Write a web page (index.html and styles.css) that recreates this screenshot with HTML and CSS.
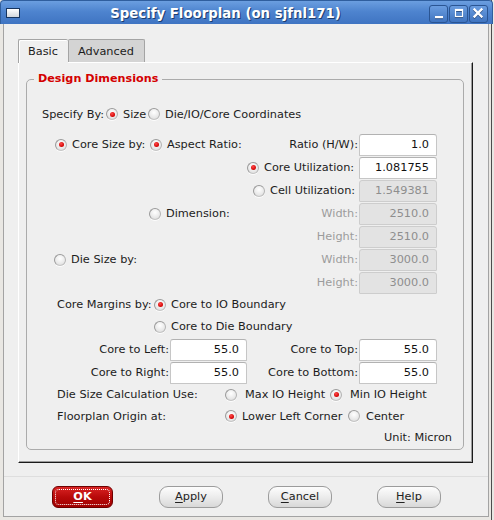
FILE: index.html
```html
<!DOCTYPE html>
<html>
<head>
<meta charset="utf-8">
<title>Specify Floorplan</title>
<link rel="stylesheet" href="styles.css">
</head>
<body>
<div class="window">
  <div class="titlebar">
    <span class="wm-icon"></span>
    <span class="title">Specify Floorplan (on sjfnl171)</span>
    <div class="wm-buttons">
      <span class="wm-btn"><svg width="17" height="16" viewBox="0 0 17 16"><rect x="5" y="10" width="8" height="2.2" fill="#fff"/></svg></span>
      <span class="wm-btn"><svg width="17" height="16" viewBox="0 0 17 16"><rect x="5.5" y="3.5" width="7" height="7" fill="none" stroke="#fff" stroke-width="1.2"/><rect x="5" y="3" width="8" height="2" fill="#fff"/></svg></span>
      <span class="wm-btn"><svg width="17" height="16" viewBox="0 0 17 16"><path d="M4.5 3.5 L11.5 10.5 M11.5 3.5 L4.5 10.5" stroke="#fff" stroke-width="2.3" stroke-linecap="square"/></svg></span>
    </div>
  </div>
  <div class="frame">
    <div class="client">
      <div class="main">
        <div class="tabs">
          <span class="tab tab-basic active">Basic</span>
          <span class="tab tab-adv">Advanced</span>
        </div>
        <div class="pane">
          <fieldset class="group">
            <legend>Design Dimensions</legend>

            <div class="row r-specify">
              <span class="cell w64">Specify By:</span>
              <span class="opt w42"><span class="rb on"></span>Size</span>
              <span class="opt"><span class="rb"></span>Die/IO/Core Coordinates</span>
            </div>

            <div class="row pl28">
              <span class="opt w95"><span class="rb on"></span>Core Size by:</span>
              <span class="opt"><span class="rb on"></span>Aspect Ratio:</span>
              <span class="pair"><span class="lbl">Ratio (H/W):</span><input class="field" value="1.0" readonly></span>
            </div>

            <div class="row pl220">
              <span class="opt"><span class="rb on"></span>Core Utilization:</span>
              <span class="pair"><input class="field" value="1.081755" readonly></span>
            </div>

            <div class="row pl226">
              <span class="opt"><span class="rb"></span>Cell Utilization:</span>
              <span class="pair"><input class="field" value="1.549381" disabled></span>
            </div>

            <div class="row pl122">
              <span class="opt"><span class="rb"></span>Dimension:</span>
              <span class="pair"><span class="lbl dim">Width:</span><input class="field" value="2510.0" disabled></span>
            </div>

            <div class="row">
              <span class="pair"><span class="lbl dim">Height:</span><input class="field" value="2510.0" disabled></span>
            </div>

            <div class="row pl27">
              <span class="opt"><span class="rb"></span>Die Size by:</span>
              <span class="pair"><span class="lbl dim">Width:</span><input class="field" value="3000.0" disabled></span>
            </div>

            <div class="row">
              <span class="pair"><span class="lbl dim">Height:</span><input class="field" value="3000.0" disabled></span>
            </div>

            <div class="row pl30 h21">
              <span class="cell w97">Core Margins by:</span>
              <span class="opt"><span class="rb on"></span>Core to IO Boundary</span>
            </div>

            <div class="row pl127">
              <span class="opt"><span class="rb"></span>Core to Die Boundary</span>
            </div>

            <div class="row">
              <span class="cell lbl-left">Core to Left:</span><input class="field narrow" value="55.0" readonly>
              <span class="cell lbl-right">Core to Top:</span><input class="field" value="55.0" readonly>
            </div>

            <div class="row">
              <span class="cell lbl-left">Core to Right:</span><input class="field narrow" value="55.0" readonly>
              <span class="cell lbl-right">Core to Bottom:</span><input class="field" value="55.0" readonly>
            </div>

            <div class="row pl30 h21">
              <span class="cell w168">Die Size Calculation Use:</span>
              <span class="opt gap8 w105"><span class="rb"></span>Max IO Height</span>
              <span class="opt gap8"><span class="rb on"></span>Min IO Height</span>
            </div>

            <div class="row pl30 h22">
              <span class="cell w168">Floorplan Origin at:</span>
              <span class="opt w123"><span class="rb on"></span>Lower Left Corner</span>
              <span class="opt gap6"><span class="rb"></span>Center</span>
            </div>

            <div class="row row-unit">
              <span>Unit: Micron</span>
            </div>
          </fieldset>
        </div>
      </div>
      <div class="buttonbar">
        <span class="btn btn-ok"><u>O</u>K</span>
        <span class="btn"><u>A</u>pply</span>
        <span class="btn"><u>C</u>ancel</span>
        <span class="btn"><u>H</u>elp</span>
      </div>
    </div>
  </div>
</div>
</body>
</html>
```

FILE: styles.css
```css
* { box-sizing: border-box; }

body {
  margin: 0;
  background: #e9e7e3;
  font-family: "DejaVu Sans", "Liberation Sans", sans-serif;
  font-size: 11.3px;
  color: #1c1c1c;
}

.window {
  width: 494px;
  height: 520px;
  display: flex;
  flex-direction: column;
  background: #e9e7e3 linear-gradient(to right, transparent 491px, #4d4d4d 491px, #4d4d4d 492px, transparent 492px);
}

/* ---------- title bar ---------- */
.titlebar {
  width: 493px;
  height: 24px;
  flex: none;
  display: flex;
  align-items: center;
  padding: 0 4px 0 5px;
  background: linear-gradient(#6b9ee0, #4e84cf 45%, #3f74c2);
  border: 1px solid #2f5e9e;
  border-bottom: none;
  border-radius: 4px 4px 0 0;
}

.wm-icon {
  width: 14px;
  height: 10px;
  flex: none;
  border: 1px solid #17355f;
  background: linear-gradient(#ffffff, #d3d7dd);
}

.title {
  flex: 1;
  text-align: center;
  padding: 3px 0 0 2px;
  color: #fff;
  font-family: "DejaVu Sans", sans-serif;
  font-weight: bold;
  font-size: 13.3px;
  line-height: 16px;
  text-shadow: 1px 1px 0 #1d3e6e;
  white-space: nowrap;
}

.wm-buttons {
  display: flex;
  gap: 1px;
  margin-top: 2px;
}

.wm-btn {
  width: 19px;
  height: 18px;
  border: 1px solid #2a5593;
  border-radius: 3px;
  background: linear-gradient(#6a9de0, #3f74c0);
  display: block;
}

.wm-btn svg { display: block; filter: drop-shadow(0 1px 0 rgba(20,45,85,0.6)); }

/* ---------- frame ---------- */
.frame {
  flex: 1;
  padding: 0 5px 3px 3px;
  display: flex;
}

.client {
  flex: 1;
  display: flex;
  flex-direction: column;
  background: #efefef;
  border: 1px solid #a3a3a3;
  border-top: none;
}

.main {
  height: 452px;
  padding: 15px 15px 13px 14px;
  flex: none;
}

/* ---------- tabs ---------- */
.tabs {
  display: flex;
  align-items: flex-start;
  height: 23px;
}

.tab {
  height: 23px;
  line-height: 23px;
  padding-left: 9px;
  border: 1px solid #a4a4a4;
  border-bottom: none;
  border-radius: 2px 2px 0 0;
}

.tab-basic {
  width: 50px;
  height: 24px;
  border-right: none;
  background: #efefef;
  box-shadow: inset 1px 1px 0 #fff;
  position: relative;
  z-index: 1;
}

.tab-adv {
  width: 77px;
  background: #d4d4d4;
}

/* ---------- pane ---------- */
.pane {
  height: 401px;
  border-top: 1px solid #fff;
  border-left: 1px solid #fff;
  border-right: 1px solid #1a1a1a;
  border-bottom: 1px solid #1a1a1a;
  box-shadow: inset -1px -1px 0 #9c9c9c;
  padding: 9px 8px 0 7px;
}

.group {
  margin: 0;
  padding: 17px 0 2px 0;
  border: 1px solid #ababab;
  border-radius: 5px;
  min-width: 0;
}

.group legend {
  margin-left: 7px;
  padding: 0 4px;
  color: #d40000;
  font-weight: bold;
  font-size: 11.2px;
  line-height: 14px;
}

/* ---------- rows ---------- */
.row {
  display: flex;
  align-items: center;
  height: 23px;
  padding-right: 26px;
  white-space: nowrap;
}

.r-specify { height: 22px; padding-left: 15px; margin-bottom: 8px; }
.h21 { height: 21px; }
.h22 { height: 22px; }
.pl27 { padding-left: 27px; }
.pl28 { padding-left: 28px; }
.pl30 { padding-left: 30px; }
.pl122 { padding-left: 122px; }
.pl127 { padding-left: 127px; }
.pl220 { padding-left: 220px; }
.pl226 { padding-left: 226px; }

.cell { flex: none; }
.w42 { width: 42px; }
.w64 { width: 64px; }
.w95 { width: 95px; }
.w97 { width: 97px; }
.w105 { width: 105px; }
.w123 { width: 123px; }
.w168 { width: 168px; }

.lbl-left { width: 142px; text-align: right; margin-right: 1px; }
.lbl-right { width: 111px; text-align: right; margin-right: 1px; }

.row-unit {
  height: 20px;
  justify-content: flex-end;
  padding-right: 11px;
}

.opt {
  display: inline-flex;
  align-items: center;
  gap: 5px;
  flex: none;
}
.gap6 { gap: 6px; }
.gap8 { gap: 8px; }

.rb {
  width: 12px;
  height: 12px;
  flex: none;
  border-radius: 50%;
  border: 1px solid #9a9a9a;
  border-bottom-color: #c4c4c4;
  border-right-color: #b4b4b4;
  background: radial-gradient(circle at 50% 35%, #ffffff, #e9e9e9 60%, #d6d6d6);
  box-shadow: 0 1px 0 rgba(255,255,255,0.8);
  display: inline-flex;
  align-items: center;
  justify-content: center;
}

.rb.on::after {
  content: "";
  width: 5px;
  height: 5px;
  border-radius: 50%;
  background: radial-gradient(circle at 40% 35%, #ff4a4a, #d00000 70%);
}

.pair {
  margin-left: auto;
  display: flex;
  align-items: center;
}

.lbl { margin-right: 1px; }
.lbl.dim { color: #9c9c9c; }

.field {
  width: 78px;
  height: 22px;
  margin: 0;
  padding: 0 7px 0 2px;
  border: 1px solid #c6c6c6;
  border-top-color: #b2b2b2;
  border-radius: 3px 3px 1px 1px;
  background: #fff;
  font: inherit;
  color: #111;
  text-align: right;
  outline: none;
}

.field.narrow { width: 77px; }

.field:disabled {
  background: #e3e3e3;
  border-color: #cdcdcd;
  color: #8e8e8e;
}

/* ---------- button bar ---------- */
.buttonbar {
  flex: 1;
  display: flex;
  align-items: flex-start;
  gap: 45px;
  padding: 9px 0 0 48px;
  border-top: 1px solid #dedede;
}

.btn {
  position: relative;
  width: 64px;
  height: 22px;
  line-height: 20px;
  text-align: center;
  border: 1px solid #9c9c9c;
  border-radius: 9px;
  background: linear-gradient(#fdfdfd, #ececec 50%, #d8d8d8);
  color: #222;
}

.btn u { text-underline-offset: 2px; }

.btn-ok {
  width: 61px;
  margin-right: 1px;
  border-color: #6e0000;
  border-radius: 6px;
  background: linear-gradient(#d92424, #b80a0a 50%, #a00000);
  color: #fff;
  font-weight: bold;
}

.btn-ok::after {
  content: "";
  position: absolute;
  inset: 2px;
  border: 1px dotted #ffffff;
  border-radius: 4px;
}
```
